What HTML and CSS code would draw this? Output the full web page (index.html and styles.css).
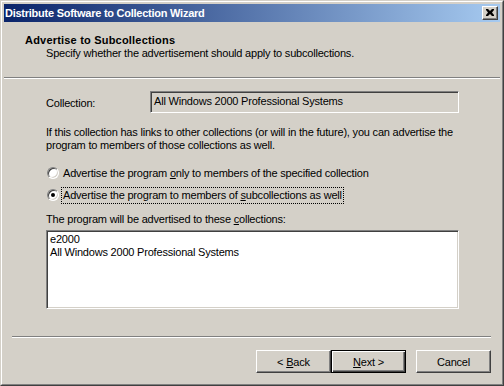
FILE: index.html
```html
<!DOCTYPE html>
<html lang="en">
<head>
  <meta charset="UTF-8">
  <title>Distribute Software to Collection Wizard</title>
  <link rel="stylesheet" href="styles.css">
</head>
<body>
  <div class="window">
    <div class="frame">

      <div class="titlebar">
        <span class="title">Distribute Software to Collection Wizard</span>
        <span class="close">
          <svg width="8" height="7" viewBox="0 0 8 7">
            <path d="M0 0h2l2 2 2-2h2v1L6 3.5 8 6v1H6L4 5 2 7H0V6l2-2.5L0 1z" fill="#000"/>
          </svg>
        </span>
      </div>

      <!-- wizard page header -->
      <div class="header">
        <div class="heading">Advertise to Subcollections</div>
        <div class="subtitle">Specify whether the advertisement should apply to subcollections.</div>
      </div>
      <div class="sep"></div>

      <div class="content">
        <div class="field-row">
          <span class="field-label">Collection:</span>
          <div class="textbox">All Windows 2000 Professional Systems</div>
        </div>

        <p class="info">If this collection has links to other collections (or will in the future), you can advertise the program to members of those collections as well.</p>

        <div class="radio-row">
          <span class="radio"></span>
          <span class="radio-text">Advertise the program <u>o</u>nly to members of the specified collection</span>
        </div>
        <div class="radio-row">
          <span class="radio checked"></span>
          <span class="radio-text focus">Advertise the program to members of <u>s</u>ubcollections as well</span>
        </div>

        <div class="list-label">The program will be advertised to these <u>c</u>ollections:</div>
        <div class="listbox">
          <div>e2000</div>
          <div>All Windows 2000 Professional Systems</div>
        </div>
      </div>

      <div class="sep bottom"></div>
      <div class="buttons">
        <button class="btn">&lt; <u>B</u>ack</button>
        <button class="btn default"><u>N</u>ext &gt;</button>
        <button class="btn cancel">Cancel</button>
      </div>

    </div>
  </div>
</body>
</html>
```

FILE: styles.css
```css
body {
  margin: 0;
  background: #d4d0c8;
  font-family: 'Liberation Sans', Arial, sans-serif;
  font-size: 11px;
  line-height: 13px;
  letter-spacing: -0.2px;
  color: #000;
}

.window {
  width: 504px;
  height: 386px;
  box-sizing: border-box;
  border: 1px solid;
  border-color: #d4d0c8 #404040 #404040 #d4d0c8;
  background: #d4d0c8;
}

.frame {
  height: 100%;
  box-sizing: border-box;
  border: 1px solid;
  border-color: #fff #808080 #808080 #fff;
  padding: 2px;
  display: flex;
  flex-direction: column;
}

.titlebar {
  height: 18px;
  display: flex;
  align-items: center;
  justify-content: space-between;
  background: linear-gradient(to right, #0a246a, #a6caf0);
  padding: 0 2px 0 1px;
}

.title {
  color: #fff;
  font-weight: bold;
  font-size: 11px;
  letter-spacing: -0.25px;
}

.close {
  width: 16px;
  height: 14px;
  box-sizing: border-box;
  background: #d4d0c8;
  border: 1px solid;
  border-color: #fff #404040 #404040 #fff;
  box-shadow: inset -1px -1px 0 #808080;
  display: flex;
  align-items: center;
  justify-content: center;
  padding: 0 1px 1px 0;
}

.header {
  padding: 12px 0 17px 21px;
}

.heading {
  font-weight: bold;
  letter-spacing: 0.2px;
}

.subtitle {
  padding-left: 21px;
}

.sep {
  border-top: 1px solid #808080;
  border-bottom: 1px solid #fff;
  height: 0;
}

.sep.bottom {
  margin: auto 9px 0 8px;
}

.content {
  padding: 12px 0 0 42px;
}

.field-row {
  display: flex;
  align-items: flex-start;
}

.field-label {
  width: 104px;
  padding-top: 6px;
}

.textbox {
  width: 309px;
  height: 22px;
  box-sizing: border-box;
  border: 1px solid;
  border-color: #808080 #fff #fff #808080;
  box-shadow: inset 1px 1px 0 #404040, inset -1px -1px 0 #d4d0c8;
  padding: 3px 3px;
}

.info {
  margin: 13px 0 10px;
  width: 416px;
}

.radio-row {
  height: 22px;
  display: flex;
  align-items: center;
  padding-left: 1px;
}

.radio {
  width: 12px;
  height: 12px;
  box-sizing: border-box;
  border-radius: 50%;
  background: #fff;
  border: 1px solid;
  border-color: #808080 #fff #fff #808080;
  box-shadow: inset 1px 1px 0 #404040, inset -1px -1px 0 #d4d0c8;
  position: relative;
  margin-right: 4px;
}

.radio.checked::after {
  content: "";
  position: absolute;
  left: 3px;
  top: 3px;
  width: 4px;
  height: 4px;
  border-radius: 50%;
  background: #000;
}

.radio-text {
  padding: 1px 1px;
  border: 1px dotted transparent;
  margin-left: -2px;
}

.radio-text.focus {
  border-color: #000;
}

.list-label {
  margin-top: 7px;
}

.listbox {
  margin-top: 4px;
  width: 413px;
  height: 79px;
  box-sizing: border-box;
  background: #fff;
  border: 1px solid;
  border-color: #808080 #fff #fff #808080;
  box-shadow: inset 1px 1px 0 #404040, inset -1px -1px 0 #d4d0c8;
  padding: 2px 3px;
}

.buttons {
  height: 44px;
  box-sizing: border-box;
  display: flex;
  justify-content: flex-end;
  padding: 12px 9px 0 0;
}

.btn {
  width: 75px;
  height: 23px;
  box-sizing: border-box;
  font-family: inherit;
  font-size: 11px;
  letter-spacing: -0.2px;
  color: #000;
  background: #d4d0c8;
  border: 1px solid;
  border-color: #fff #404040 #404040 #fff;
  box-shadow: inset -1px -1px 0 #808080;
  padding: 0;
}

.btn.default {
  border: 1px solid #000;
  box-shadow: inset 1px 1px 0 #fff, inset -1px -1px 0 #404040, inset -2px -2px 0 #808080;
}

.btn.cancel {
  margin-left: 10px;
}
```
